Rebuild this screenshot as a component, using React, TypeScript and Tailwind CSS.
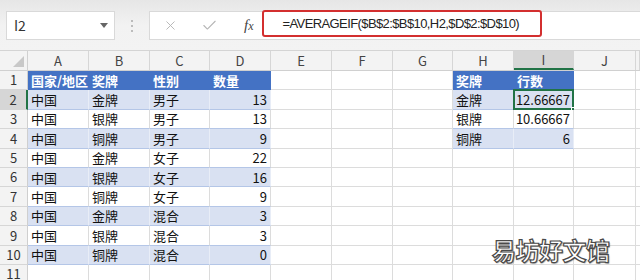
import { X, Check } from "lucide-react";

const widths = ["w-[61px]", "w-[61px]", "w-[60px]", "w-[61px]", "w-[61px]", "w-[61px]", "w-[60px]", "w-[61px]", "w-[60px]", "w-[62px]", "flex-1"];
const letters = ["A", "B", "C", "D", "E", "F", "G", "H", "I", "J", ""];

const medals: [string, string, string, number][] = [
  ["中国", "金牌", "男子", 13],
  ["中国", "银牌", "男子", 13],
  ["中国", "铜牌", "男子", 9],
  ["中国", "金牌", "女子", 22],
  ["中国", "银牌", "女子", 16],
  ["中国", "铜牌", "女子", 9],
  ["中国", "金牌", "混合", 3],
  ["中国", "银牌", "混合", 3],
  ["中国", "铜牌", "混合", 0],
];

const summary: [string, string][] = [
  ["奖牌", "行数"],
  ["金牌", "12.66667"],
  ["银牌", "10.66667"],
  ["铜牌", "6"],
];

type Cell = { text: string; right?: boolean; kind: "head" | "band" | "plain" | "grid"; selected?: boolean };

function buildRow(r: number): Cell[] {
  const cells: Cell[] = letters.map(() => ({ text: "", kind: "grid" as const }));
  if (r === 1) {
    ["国家/地区", "奖牌", "性别", "数量"].forEach((t, i) => (cells[i] = { text: t, kind: "head" }));
  } else if (r <= 10) {
    const m = medals[r - 2];
    const kind = r % 2 === 0 ? "band" : "plain";
    cells[0] = { text: m[0], kind };
    cells[1] = { text: m[1], kind };
    cells[2] = { text: m[2], kind };
    cells[3] = { text: String(m[3]), kind, right: true };
  }
  if (r <= 4) {
    const s = summary[r - 1];
    const kind = r === 1 ? "head" : r % 2 === 0 ? "band" : "plain";
    cells[7] = { text: s[0], kind };
    cells[8] = { text: s[1], kind, right: r > 1, selected: r === 2 };
  }
  return cells;
}

function cellClass(c: Cell) {
  if (c.kind === "head") return "bg-[#4472c4] text-white font-bold border-r border-r-[#4472c4] border-b border-b-[#4472c4]";
  if (c.kind === "band") return "bg-[#d9e1f2] text-[#111] border-r border-r-[#e8edf7] border-b border-b-[#b4c6e7]";
  if (c.kind === "plain") return "bg-white text-[#111] border-r border-r-[#dcdcdc] border-b border-b-[#b4c6e7]";
  return "bg-white border-r border-r-[#dcdcdc] border-b border-b-[#dcdcdc]";
}

export default function App() {
  const rows = Array.from({ length: 11 }, (_, i) => i + 1);
  return (
    <div className="relative w-[640px] h-[280px] overflow-hidden bg-white text-[13px] font-['Noto_Sans_CJK_SC','Noto_Sans',sans-serif]">
      {/* formula bar */}
      <div className="h-[51px] bg-gradient-to-b from-[#e6e6e6] via-[#f2f2f2] to-[#f3f3f3] border-b border-[#d4d4d4] flex items-start pt-[11px] pl-[6px]">
        <div className="w-[109px] h-[29px] bg-white border border-[#d9d9d9] flex items-center justify-between pl-[7px] pr-[6px] text-[#333] text-[14px]">
          <span>I2</span>
          <span className="w-0 h-0 border-l-[4px] border-l-transparent border-r-[4px] border-r-transparent border-t-[5px] border-t-[#666]" />
        </div>
        <div className="w-[34px] h-[29px] flex flex-col items-center justify-center gap-[3px]">
          <span className="w-[2px] h-[2px] bg-[#aaa] rounded-full" />
          <span className="w-[2px] h-[2px] bg-[#aaa] rounded-full" />
          <span className="w-[2px] h-[2px] bg-[#aaa] rounded-full" />
        </div>
        <div className="flex-1 h-[29px] bg-white border border-[#d9d9d9] border-r-0 flex items-center">
          <X size={15} strokeWidth={1.5} className="ml-[13px] text-[#b5b5b5]" />
          <Check size={17} strokeWidth={1.5} className="ml-[23px] text-[#b5b5b5]" />
          <span className="ml-[26px] text-[#444] text-[15px] italic font-['Liberation_Serif',serif]">
            f<span className="text-[12px]">x</span>
          </span>
          <div className="ml-[8px] -mt-[4px] w-[280px] h-[27px] rounded-[3px] border-[2.5px] border-[#d32f2f] flex items-center pl-[19px] text-[13px] text-[#222] tracking-[-0.6px] font-['Liberation_Sans',sans-serif]">
            =AVERAGEIF($B$2:$B$10,H2,$D$2:$D$10)
          </div>
        </div>
      </div>

      {/* column headers */}
      <div className="flex h-[20px] bg-[#f3f3f3] border-b border-[#d0d0d0]">
        <div className="w-[28px] shrink-0 border-r border-[#d0d0d0] relative">
          <span className="absolute right-[3px] bottom-[3px] w-0 h-0 border-l-[11px] border-l-transparent border-b-[11px] border-b-[#c8c8c8]" />
        </div>
        {letters.map((l, i) => (
          <div
            key={i}
            className={`${widths[i]} shrink-0 flex items-center justify-center text-[13px] text-[#444] border-r border-[#d6d6d6] ${
              l === "I" ? "bg-[#d6d6d6] border-b-2 border-b-[#217346]" : ""
            }`}
          >
            {l}
          </div>
        ))}
      </div>

      {/* rows */}
      {rows.map((r) => (
        <div key={r} className="flex h-[19.4px]">
          <div
            className={`w-[28px] shrink-0 flex items-center justify-center text-[13px] text-[#333] border-b border-[#d6d6d6] ${
              r === 2 ? "bg-[#d6d6d6] border-r-2 border-r-[#217346]" : "bg-[#f3f3f3] border-r border-r-[#cfcfcf]"
            }`}
          >
            {r}
          </div>
          {buildRow(r).map((c, i) => (
            <div
              key={i}
              className={`${widths[i]} shrink-0 relative flex items-center px-[3px] leading-none whitespace-nowrap ${cellClass(c)} ${
                c.right ? "justify-end" : ""
              }`}
            >
              {c.text}
              {c.selected && (
                <>
                  <span className="absolute -left-[1px] -top-[1px] -right-[1px] -bottom-[1px] border-2 border-[#217346]" />
                  <span className="absolute -right-[4px] -bottom-[4px] w-[6px] h-[6px] bg-[#217346] border border-white" />
                </>
              )}
            </div>
          ))}
        </div>
      ))}

      {/* watermark */}
      <div className="absolute left-[492px] top-[232px] text-[24px] text-white font-bold tracking-[-0.5px] [-webkit-text-stroke:1.2px_#4a4a4a] [text-shadow:1px_1px_1px_rgba(0,0,0,0.35)]">
        易坊好文馆
      </div>
    </div>
  );
}
